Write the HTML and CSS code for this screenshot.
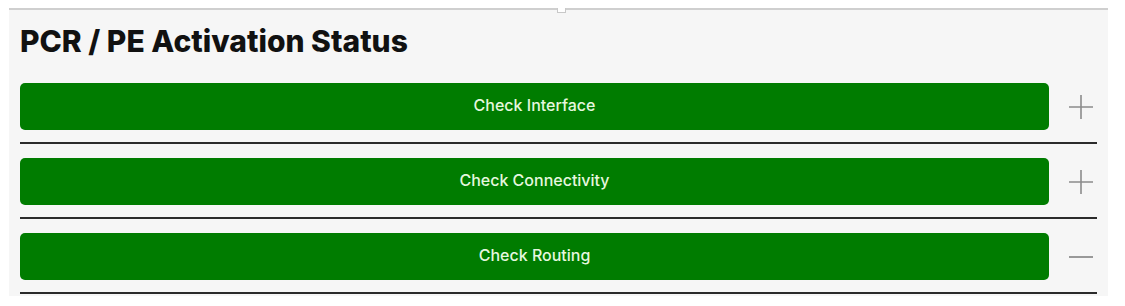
FILE: index.html
```html
<!DOCTYPE html>
<html lang="en">
<head>
  <meta charset="UTF-8">
  <title>PCR / PE Activation Status</title>
  <link rel="stylesheet" href="styles.css">
</head>
<body>
<section class="panel">
  <span class="panel-notch"></span>
  <h1 class="panel-title">PCR / PE Activation Status</h1>
  <div class="check-list">
    <div class="check-row">
      <button type="button" class="check-btn">Check Interface</button>
      <span class="toggle">
        <svg width="26" height="26" viewBox="0 0 26 26"><path d="M1 13h24M13 1v24" stroke="#8c8c8c" stroke-width="1.6" fill="none"/></svg>
      </span>
    </div>
    <div class="check-row">
      <button type="button" class="check-btn">Check Connectivity</button>
      <span class="toggle">
        <svg width="26" height="26" viewBox="0 0 26 26"><path d="M1 13h24M13 1v24" stroke="#8c8c8c" stroke-width="1.6" fill="none"/></svg>
      </span>
    </div>
    <div class="check-row is-open">
      <button type="button" class="check-btn">Check Routing</button>
      <span class="toggle">
        <svg width="26" height="26" viewBox="0 0 26 26"><path d="M1 13h24" stroke="#999" stroke-width="2" fill="none"/></svg>
      </span>
    </div>
  </div>
</section>
</body>
</html>
```

FILE: styles.css
```css
*{
  box-sizing: border-box;
}
body{
  font-family: "Liberation Sans", Arial, Helvetica, sans-serif;
  margin: 0;
  padding: 0;
  background: #fff;
}
.panel{
  position: relative;
  width: 1099px;
  margin: 8px 0 0 9px;
  padding: 0 11px 2px 11px;
  background: #f6f6f6;
  border-top: 2px solid #cfcfcf;
}
.panel-notch{
  position: absolute;
  top: -2px;
  left: 548px;
  width: 9px;
  height: 5px;
  border: 1px solid #c8c8c8;
  border-top: 0;
  background: #fff;
}
.panel-title{
  margin: 0;
  padding: 15px 0 0 0;
  height: 73px;
  font-family: Inter, "Liberation Sans", Arial, sans-serif;
  font-size: 30px;
  line-height: 32px;
  font-weight: 800;
  color: #111;
  letter-spacing: 0;
}
.check-row{
  display: flex;
  align-items: center;
  padding-bottom: 12px;
  margin-bottom: 14px;
  border-bottom: 2px solid #2b2b2b;
}
.check-row:last-child{
  margin-bottom: 0;
}
.check-btn{
  flex: 0 0 1029px;
  height: 47px;
  padding: 0 0 3px 0;
  border: 0;
  border-radius: 5px;
  background: #007c00;
  color: #e6f7df;
  font-family: Inter, "Liberation Sans", Arial, sans-serif;
  font-size: 16px;
  font-weight: 500;
  cursor: pointer;
}
.toggle{
  flex: 1;
  display: flex;
  justify-content: center;
  padding-left: 16px;
}
.toggle svg{
  display: block;
}
```
